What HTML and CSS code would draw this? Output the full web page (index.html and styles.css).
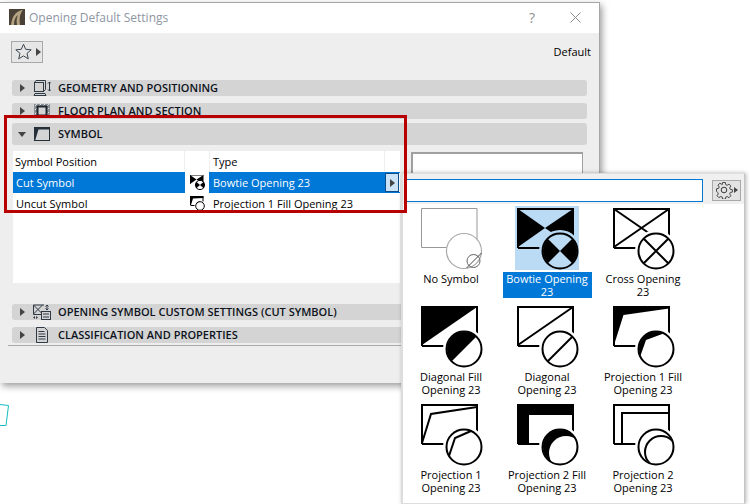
FILE: index.html
```html
<!DOCTYPE html>
<html lang="en">
<head>
<meta charset="utf-8">
<title>Opening Default Settings</title>
<link rel="stylesheet" href="styles.css">
</head>
<body>
<div class="desktop">
  <svg class="stray" width="10" height="24" viewBox="0 0 10 24"><path d="M0 .5 8.500 1.500 6 21.500H0" fill="none" stroke="#16bcc0"/></svg>

  <section class="dialog">
    <header class="titlebar">
      <svg class="appicon" width="16" height="16" viewBox="0 0 16 16"><rect width="16" height="16" fill="#4a4237"/><path d="M2 16C3 7 7 2 14 1c-3 3-4 8-3 15H8C7 11 8 8 9 6 6 8 5 12 5 16Z" fill="#b5a382"/></svg>
      <span class="title">Opening Default Settings</span>
      <span class="help">?</span>
      <svg class="close" width="11" height="11" viewBox="0 0 11 11"><path d="M.5.5l10 10M10.500.5l-10 10" stroke="#8a8a8a" fill="none"/></svg>
    </header>
    <div class="toolbar">
      <button class="star">
        <svg width="17" height="17" viewBox="0 0 17 17"><path d="M8.500 1.200 10.700 6.300l5.500.5-4.200 3.600 1.300 5.400-4.800-2.900-4.800 2.900 1.300-5.400L.8 6.800l5.500-.5Z" fill="none" stroke="#3c4650"/></svg>
        <i class="arrow"></i>
      </button>
      <span class="default">Default</span>
    </div>

    <div class="bar">
      <i class="arrow"></i>
      <svg class="secicon" width="18" height="16" viewBox="0 0 18 16"><g fill="none" stroke="#2f3a44"><rect x="1.500" y="2.500" width="9" height="9"/><path d="M1.500 2.500 3 .5h9.500v9l-2 2M2 13.500h10l1 2H1Z"/><path d="M16.500 2v9M15 3.500 16.500 2 18 3.500M15 9.500l1.500 1.500 1.500-1.500"/></g></svg>
      <span>GEOMETRY AND POSITIONING</span>
    </div>
    <div class="bar">
      <i class="arrow"></i>
      <svg class="secicon" width="18" height="16" viewBox="0 0 18 16"><rect x="1" y="1" width="16" height="14" fill="#8a8f94"/><path d="M2 3 4 1M6 3l2-2M10 3l2-2M14 3l2-2M2 7l2-2M14 7l2-2M2 11l2-2M14 11l2-2M2 15l2-2M6 15l2-2M10 15l2-2M14 15l2-2" stroke="#e2e2e2"/><rect x="4.500" y="3.500" width="9" height="9" fill="#d4d4d4" stroke="#1e262e" stroke-width="2"/></svg>
      <span>FLOOR PLAN AND SECTION</span>
    </div>
    <div class="bar open">
      <i class="arrow down"></i>
      <svg class="secicon" width="18" height="16" viewBox="0 0 18 16"><rect x="1.500" y="1.500" width="15" height="13" fill="none" stroke="#26303a"/><path d="M1 1h16v2.500H5.500L2 15H1Z" fill="#26303a"/></svg>
      <span>SYMBOL</span>
    </div>

    <div class="panel">
      <div class="table">
        <div class="row head">
          <span class="cell name">Symbol Position</span>
          <span class="cell glyph"></span>
          <span class="cell type">Type</span>
          <span class="cell more"></span>
        </div>
        <div class="row selected">
          <span class="cell name">Cut Symbol</span>
          <span class="cell glyph">
            <svg width="15" height="15" viewBox="0 0 15 15"><path d="M0 0h13.500v9H0Z" fill="#fff"/><path d="M0 0 6.500 4.500 13.500 0v9L6.500 4.500 0 9Z" fill="#000"/><path d="M0 0h13.500M0 0v9" stroke="#000"/><circle cx="10" cy="10" r="4.600" fill="#fff" stroke="#000"/><path d="M10 10 6 6.500v7ZM10 10l4-3.500v7Z" fill="#000"/></svg>
          </span>
          <span class="cell type">Bowtie Opening 23</span>
          <span class="cell more"><button class="picker"><i class="arrow"></i></button></span>
        </div>
        <div class="row">
          <span class="cell name">Uncut Symbol</span>
          <span class="cell glyph">
            <svg width="15" height="15" viewBox="0 0 15 15"><path d="M.5 9V.5h12.500v5" fill="none" stroke="#000"/><path d="M0 0h13.500v2L3 2.500 1 9H0Z" fill="#000"/><path d="M.5 9.500h4" stroke="#000"/><circle cx="10" cy="10" r="4.300" fill="#fff" stroke="#000"/><path d="M6 9 7.500 6.500 11 5.500 7 6Z" fill="#000"/></svg>
          </span>
          <span class="cell type">Projection 1 Fill Opening 23</span>
          <span class="cell more"></span>
        </div>
      </div>
      <div class="preview"></div>
    </div>

    <div class="bar custom">
      <i class="arrow"></i>
      <svg class="secicon" width="18" height="16" viewBox="0 0 18 16"><g fill="none" stroke="#2f3a44"><path d="M11 1H.5v9.500H11M.5 1l9 9M9.500 1l-9 9"/><path d="M14 1v5M12.500 2.500 14 1l1.500 1.500M12.500 4.500 14 6l1.500-1.500"/><rect x="8.500" y="7.500" width="9" height="8" fill="#d4d4d4"/><path d="M10 10h6M10 13h6"/></g><path d="M0 13.500 2 12v3ZM5 13.500 3 12v3Z" fill="#2f3a44"/></svg>
      <span>OPENING SYMBOL CUSTOM SETTINGS (CUT SYMBOL)</span>
    </div>
    <div class="bar">
      <i class="arrow"></i>
      <svg class="secicon doc" width="12" height="16" viewBox="0 0 12 16"><path d="M.5.500h8l3 3v12H.5Z" fill="none" stroke="#2f3a44"/><path d="M2.500 4.500h6M2.500 7h7M2.500 9.500h7M2.500 12h7" stroke="#2f3a44"/></svg>
      <span>CLASSIFICATION AND PROPERTIES</span>
    </div>
    <hr class="rule">
  </section>

  <aside class="popover">
    <div class="search">
      <input class="field" type="text">
      <button class="gear">
        <svg width="18" height="18" viewBox="0 0 18 18"><g fill="none" stroke="#3a3a3a"><circle cx="9" cy="9" r="2.800"/><path d="M7.500 1h3l.4 2.300 1.500.7 2-1.300 2 2.100-1.300 2 .7 1.500 2.200.4v2.600l-2.200.4-.7 1.500 1.300 2-2 2.100-2-1.300-1.500.7-.4 2.200h-3l-.4-2.200-1.500-.7-2 1.300-2-2.100 1.300-2-.7-1.500L1 10.300V7.700l2.200-.4.700-1.500-1.300-2 2-2.100 2 1.300L7.100 3.300Z" transform="translate(.6 .6) scale(.93)"/></g></svg>
        <i class="arrow"></i>
      </button>
    </div>
    <div class="gallery">
      <figure class="item">
        <div class="thumb">
          <svg width="62" height="62" viewBox="0 0 62 62">
            <path d="M.5 39.500V.5h55.500v39Z" fill="none" stroke="#999"/>
            <circle cx="43" cy="43" r="17.500" fill="#fff" stroke="#aaa" stroke-width="1.200"/>
            <circle cx="52.500" cy="53" r="6.500" fill="none" stroke="#666"/>
            <path d="M45.500 60 60.500 45" stroke="#444"/>
          </svg>
        </div>
        <figcaption>No Symbol</figcaption>
      </figure>
      <figure class="item active">
        <div class="thumb">
          <svg width="62" height="62" viewBox="0 0 62 62">
            <clipPath id="c1"><circle cx="43" cy="43" r="17"/></clipPath>
            <path d="M1 1 28 20 1 39ZM56 1 28 20 56 39Z" fill="#000"/>
            <path d="M1 40V1h55v39H1" fill="none" stroke="#000" stroke-width="2"/>
            <circle class="halo" cx="43" cy="43" r="21"/>
            <g clip-path="url(#c1)"><path d="M43 43 20 20V66ZM43 43 66 20V66Z" fill="#000"/></g>
            <circle cx="43" cy="43" r="17.500" fill="none" stroke="#000" stroke-width="2"/>
          </svg>
        </div>
        <figcaption>Bowtie Opening<br>23</figcaption>
      </figure>
      <figure class="item">
        <div class="thumb">
          <svg width="62" height="62" viewBox="0 0 62 62">
            <path d="M1 40V1h55v39H1M1 1 56 39M56 1 1 39" fill="none" stroke="#000" stroke-width="2"/>
            <circle class="halo" cx="43" cy="43" r="21"/>
            <circle cx="43" cy="43" r="17.500" fill="none" stroke="#000" stroke-width="2"/>
            <path d="M31 31 55 55M55 31 31 55" stroke="#000" stroke-width="2"/>
          </svg>
        </div>
        <figcaption>Cross Opening<br>23</figcaption>
      </figure>
      <figure class="item">
        <div class="thumb">
          <svg width="62" height="62" viewBox="0 0 62 62">
            <clipPath id="c2"><circle cx="43" cy="43" r="17"/></clipPath>
            <path d="M1 1H56L1 39Z" fill="#000"/>
            <path d="M1 40V1h55v39H1" fill="none" stroke="#000" stroke-width="2"/>
            <circle class="halo" cx="43" cy="43" r="21"/>
            <g clip-path="url(#c2)"><path d="M20 20H60V26L26 60H20Z" fill="#000"/></g>
            <circle cx="43" cy="43" r="17.500" fill="none" stroke="#000" stroke-width="2"/>
          </svg>
        </div>
        <figcaption>Diagonal Fill<br>Opening 23</figcaption>
      </figure>
      <figure class="item">
        <div class="thumb">
          <svg width="62" height="62" viewBox="0 0 62 62">
            <path d="M1 40V1h55v39H1M1 39 56 1" fill="none" stroke="#000" stroke-width="2"/>
            <circle class="halo" cx="43" cy="43" r="21"/>
            <circle cx="43" cy="43" r="17.500" fill="none" stroke="#000" stroke-width="2"/>
            <path d="M31 55 55 31" stroke="#000" stroke-width="2"/>
          </svg>
        </div>
        <figcaption>Diagonal<br>Opening 23</figcaption>
      </figure>
      <figure class="item">
        <div class="thumb">
          <svg width="62" height="62" viewBox="0 0 62 62">
            <clipPath id="c3"><circle cx="43" cy="43" r="17"/></clipPath>
            <path d="M1 1H56V2.500L10.500 9 1 39Z" fill="#000"/>
            <path d="M1 40V1h55v39H1" fill="none" stroke="#000" stroke-width="2"/>
            <circle class="halo" cx="43" cy="43" r="21"/>
            <g clip-path="url(#c3)"><path d="M20 20H60V24L33 34 27 51 20 56Z" fill="#000"/></g>
            <circle cx="43" cy="43" r="17.500" fill="none" stroke="#000" stroke-width="2"/>
          </svg>
        </div>
        <figcaption>Projection 1 Fill<br>Opening 23</figcaption>
      </figure>
      <figure class="item">
        <div class="thumb">
          <svg width="62" height="62" viewBox="0 0 62 62">
            <path d="M1 40V1h55v39H1M1 39 10 10 56 3" fill="none" stroke="#000" stroke-width="2"/>
            <circle class="halo" cx="43" cy="43" r="21"/>
            <circle cx="43" cy="43" r="17.500" fill="none" stroke="#000" stroke-width="2"/>
            <path d="M28 52 34 34 50 27" fill="none" stroke="#000" stroke-width="2"/>
          </svg>
        </div>
        <figcaption>Projection 1<br>Opening 23</figcaption>
      </figure>
      <figure class="item">
        <div class="thumb">
          <svg width="62" height="62" viewBox="0 0 62 62">
            <clipPath id="c4"><circle cx="43" cy="43" r="17"/></clipPath>
            <path d="M1 1H56V11H12V39H1Z" fill="#000"/>
            <path d="M1 40V1h55v39H1" fill="none" stroke="#000" stroke-width="2"/>
            <circle class="halo" cx="43" cy="43" r="21"/>
            <g clip-path="url(#c4)"><rect x="20" y="20" width="46" height="46" fill="#000"/><circle cx="49" cy="49" r="17" fill="#fff"/></g>
            <circle cx="43" cy="43" r="17.500" fill="none" stroke="#000" stroke-width="2"/>
          </svg>
        </div>
        <figcaption>Projection 2 Fill<br>Opening 23</figcaption>
      </figure>
      <figure class="item">
        <div class="thumb">
          <svg width="62" height="62" viewBox="0 0 62 62">
            <clipPath id="c5"><circle cx="43" cy="43" r="17"/></clipPath>
            <path d="M1 40V1h55v39H1M9 39V9H56" fill="none" stroke="#000" stroke-width="2"/>
            <circle class="halo" cx="43" cy="43" r="21"/>
            <g clip-path="url(#c5)"><circle cx="48" cy="48" r="16" fill="none" stroke="#000" stroke-width="2"/></g>
            <circle cx="43" cy="43" r="17.500" fill="none" stroke="#000" stroke-width="2"/>
          </svg>
        </div>
        <figcaption>Projection 2<br>Opening 23</figcaption>
      </figure>
    </div>
  </aside>

  <div class="callout"></div>
</div>
</body>
</html>
```

FILE: styles.css
```css
* { box-sizing: border-box; }
html, body { margin: 0; padding: 0; }
body { font-family: "Open Sans", "Noto Sans", sans-serif; font-size: 11px; color: #000; }

.desktop { position: relative; width: 750px; height: 504px; overflow: hidden; background: #fff; }

.stray { position: absolute; left: 0; top: 404px; }

.dialog {
  position: absolute; left: 0; top: 2px; width: 600px; height: 381px;
  background: #eee;
  border-top: 1px solid #a6a6a6; border-right: 1px solid #a6a6a6;
  box-shadow: 2px 3px 7px rgba(0, 0, 0, .4);
}

.titlebar { display: flex; align-items: center; height: 30px; padding: 0 0 2px 9px; background: #fff; }
.appicon { margin-right: 4px; }
.title { font-size: 12px; color: #8d96a3; flex: 1; }
.help { font-size: 14px; color: #8f8f8f; margin-right: 35px; }
.close { margin-right: 18px; }

.toolbar { display: flex; align-items: center; justify-content: space-between; height: 47px; padding: 0 8px 4px 11px; }
.default { margin-top: -6px; }
.star {
  display: flex; align-items: center; gap: 4px;
  width: 32px; height: 22px; padding: 0 0 0 3px; margin-top: -6px;
  background: #e6e6e6; border: 1px solid #a8a8a8;
}

.arrow { display: block; width: 0; height: 0; border-style: solid; border-width: 4px 0 4px 5px; border-color: transparent transparent transparent #444; }
.arrow.down { border-width: 5px 4px 0 4px; border-color: #444 transparent transparent; margin-left: -2px; margin-right: -1px; }

.bar {
  display: flex; align-items: center;
  width: 575px; height: 16px; margin: 0 0 7px 12px; padding-left: 8px;
  background: #d4d4d4; border-radius: 3px;
  font-weight: 600; font-size: 11px; color: #0c1220;
}
.bar span { white-space: nowrap; margin-top: -2px; }
.secicon { margin-left: 8px; margin-right: 7px; flex: none; }
.secicon.doc { margin-left: 11px; margin-right: 10px; }
.bar.open { height: 22px; margin: -3px 0 6px 12px; }
.bar.custom { margin-top: 21px; }

.panel { display: flex; gap: 11px; height: 132px; padding-left: 13px; }
.table { width: 387px; background: #fff; flex: none; }
.row { display: grid; grid-template-columns: 172px 25px 175px 15px; height: 21px; }
.cell { display: flex; align-items: center; white-space: nowrap; }
.name { padding-left: 3px; }
.type { padding-left: 3px; }
.glyph { justify-content: center; }
.head .cell { border-right: 1px solid #eee; }
.head .name { padding-left: 2px; }
.head .glyph { border-right: 1px solid #eee; }
.head .more { border-right: 0; }
.selected { background: #0078d7; color: #fff; }
.selected .glyph { background: #fff; width: 24px; }
.selected .more { background: #fff; border-top: 1px solid #0078d7; border-bottom: 1px solid #0078d7; }
.picker {
  display: flex; align-items: center; justify-content: center;
  width: 14px; height: 19px; padding: 0;
  background: #cbe2f7; border: 1px solid #0a4f8c;
}
.preview { width: 172px; height: 60px; margin-top: 1px; background: #fff; border: 1px solid #a0a0a0; border-left-width: 2px; border-top-width: 2px; }

.rule { width: 583px; margin: -5px 0 0 8px; border: 0; border-top: 1px solid #aaa; }

.popover {
  position: absolute; left: 401px; top: 173px; width: 344px; height: 331px;
  background: #fff;
  border: 1px solid #ddd; border-left-width: 2px; border-right-color: #c4c4c4;
  box-shadow: 1px 0 4px rgba(0, 0, 0, .3);
}
.search { display: flex; align-items: center; gap: 9px; height: 30px; padding: 0 3px 0 2px; background: #f0f0f0; }
.field { width: 299px; height: 23px; margin-top: 2px; background: #fff; border: 1px solid #0078d7; outline: 0; }
.gear {
  display: flex; align-items: center; gap: 1px;
  width: 29px; height: 21px; padding: 0 0 0 2px; margin-top: 2px;
  background: #e2e2e2; border: 1px solid #a8a8a8;
}
.gear .arrow { border-width: 3px 0 3px 4px; }

.gallery { display: grid; grid-template-columns: repeat(3, 96px); grid-auto-rows: 98px; padding: 2px 0 0 0; }
.item { display: flex; flex-direction: column; align-items: center; margin: 0; }
.thumb { width: 64px; height: 66px; padding: 2px 0 0 2px; }
.thumb svg { display: block; }
.thumb .halo { fill: #fff; }
figcaption { width: 89px; height: 26px; font-size: 11px; line-height: 13px; text-align: center; white-space: nowrap; }
.item.active .thumb { background: #bbdaf3; height: 64px; margin-bottom: 2px; }
.item.active .thumb .halo { fill: #bbdaf3; }
.item.active figcaption { background: #0078d7; color: #fff; }

.callout { position: absolute; left: 4px; top: 115px; width: 403px; height: 98px; border: 3px solid #b80000; }
```
